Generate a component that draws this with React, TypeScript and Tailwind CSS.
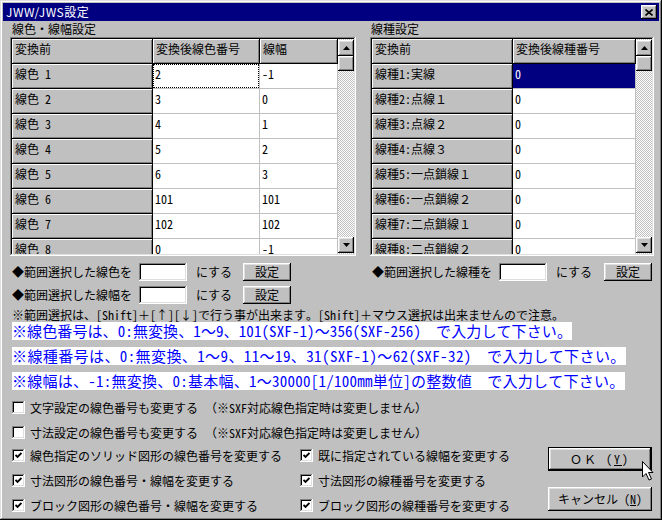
import React from 'react';

const raised =
  'shadow-[inset_-1px_-1px_#000,inset_1px_1px_#fff,inset_-2px_-2px_#808080,inset_2px_2px_#dfdfdf]';
const sunken =
  'shadow-[inset_-1px_-1px_#fff,inset_1px_1px_#808080,inset_-2px_-2px_#dfdfdf,inset_2px_2px_#000]';
const fixedCell =
  'bg-[#c0c0c0] border-r border-b border-black shadow-[inset_1px_1px_#fff,inset_-1px_-1px_#808080] pl-[3px] pt-[3px] overflow-hidden whitespace-nowrap';
const dataCell = 'bg-white border-r border-b border-[#c0c0c0] pl-[2px] pt-[3px] overflow-hidden whitespace-nowrap';
const selCell = 'bg-[#000080] text-white border-r border-b border-[#c0c0c0] pl-[2px] pt-[3px] overflow-hidden whitespace-nowrap';

function Arrow({ down }: { down?: boolean }) {
  return (
    <div className={`w-[16px] h-[16px] shrink-0 bg-[#c0c0c0] flex items-center justify-center ${raised}`}>
      <svg width="7" height="4" viewBox="0 0 7 4">
        {down ? <polygon points="0,0 7,0 3.5,4" fill="#000" /> : <polygon points="3.5,0 7,4 0,4" fill="#000" />}
      </svg>
    </div>
  );
}

function Scrollbar() {
  return (
    <div className="w-[16px] shrink-0 flex flex-col pt-[1px] pb-[1px] bg-[repeating-conic-gradient(#c0c0c0_0%_25%,#fff_0%_50%)] bg-[length:2px_2px]">
      <Arrow />
      <div className={`h-[15px] shrink-0 bg-[#c0c0c0] ${raised}`} />
      <div className="flex-1" />
      <Arrow down />
    </div>
  );
}

const colorRows = [
  ['線色 1', '2', '-1'],
  ['線色 2', '3', '0'],
  ['線色 3', '4', '1'],
  ['線色 4', '5', '2'],
  ['線色 5', '6', '3'],
  ['線色 6', '101', '101'],
  ['線色 7', '102', '102'],
  ['線色 8', '0', '-1'],
];

const typeRows = [
  '線種1:実線',
  '線種2:点線１',
  '線種3:点線２',
  '線種4:点線３',
  '線種5:一点鎖線１',
  '線種6:一点鎖線２',
  '線種7:二点鎖線１',
  '線種8:二点鎖線２',
];

function Check({ checked }: { checked?: boolean }) {
  return (
    <div className={`w-[13px] h-[13px] shrink-0 bg-white flex items-center justify-center ${sunken}`}>
      {checked && (
        <svg width="7" height="7" viewBox="0 0 7 7">
          <polyline points="0.5,3 2.5,5 6.5,1" fill="none" stroke="#000" strokeWidth="1.8" />
        </svg>
      )}
    </div>
  );
}

function Btn({ label, className = '' }: { label: React.ReactNode; className?: string }) {
  return (
    <div className={`bg-[#c0c0c0] flex items-center justify-center ${raised} ${className}`}>{label}</div>
  );
}

export default function App() {
  return (
    <div className="relative w-[662px] h-[520px] bg-[#c0c0c0] p-[3px] overflow-hidden text-[12px] leading-[14px] text-black font-['Noto_Sans_Mono_CJK_JP','Noto_Sans_CJK_JP',sans-serif] shadow-[inset_-1px_-1px_#000,inset_1px_1px_#dfdfdf,inset_-2px_-2px_#808080,inset_2px_2px_#fff]">
      {/* title bar */}
      <div className="h-[18px] bg-[#000080] flex items-center justify-between pl-[3px] pr-[2px]">
        <span className="text-white font-['Noto_Sans_CJK_JP',sans-serif] tracking-[0.5px]">JWW/JWS設定</span>
        <div className={`w-[16px] h-[14px] bg-[#c0c0c0] flex items-center justify-center ${raised}`}>
          <svg width="8" height="7" viewBox="0 0 8 7">
            <path d="M0.5 0.5 L7.5 6.5 M7.5 0.5 L0.5 6.5" stroke="#000" strokeWidth="1.6" />
          </svg>
        </div>
      </div>

      <div className="pl-[7px] pr-[5px]">
        {/* section labels */}
        <div className="h-[16px] flex items-center">
          <span className="w-[361px] pl-[2px]">線色・線幅設定</span>
          <span>線種設定</span>
        </div>

        {/* grids */}
        <div className="flex gap-[14px]">
          <div className={`w-[346px] h-[219px] p-[2px] flex ${sunken}`}>
            <div className="flex-1 bg-white overflow-hidden">
              <div className="flex h-[25px]">
                <div className={`w-[141px] ${fixedCell}`}>変換前</div>
                <div className={`w-[107px] ${fixedCell}`}>変換後線色番号</div>
                <div className={`flex-1 ${fixedCell}`}>線幅</div>
              </div>
              {colorRows.map((r, i) => (
                <div key={i} className="flex h-[25px] shrink-0">
                  <div className={`w-[141px] ${fixedCell}`}>{r[0]}</div>
                  <div className={`w-[107px] ${dataCell}`}>
                    {i === 0 ? (
                      <div className="h-[24px] -ml-[2px] -mt-[3px] pl-[2px] pt-[3px] outline outline-1 outline-dotted outline-black -outline-offset-1">
                        {r[1]}
                      </div>
                    ) : (
                      r[1]
                    )}
                  </div>
                  <div className={`flex-1 ${dataCell}`}>{r[2]}</div>
                </div>
              ))}
            </div>
            <Scrollbar />
          </div>

          <div className={`w-[284px] h-[219px] p-[2px] flex ${sunken}`}>
            <div className="flex-1 bg-white overflow-hidden">
              <div className="flex h-[25px]">
                <div className={`w-[141px] ${fixedCell}`}>変換前</div>
                <div className={`flex-1 ${fixedCell}`}>変換後線種番号</div>
              </div>
              {typeRows.map((r, i) => (
                <div key={i} className="flex h-[25px] shrink-0">
                  <div className={`w-[141px] ${fixedCell}`}>{r}</div>
                  <div className={`flex-1 ${i === 0 ? selCell : dataCell}`}>0</div>
                </div>
              ))}
            </div>
            <Scrollbar />
          </div>
        </div>

        {/* range rows */}
        <div className="mt-[7px] h-[18px] flex items-center">
          <div className="w-[362px] flex items-center pl-[2px]">
            <span className="w-[127px]">◆範囲選択した線色を</span>
            <div className={`w-[48px] h-[18px] bg-white ${sunken}`} />
            <span className="w-[56px] pl-[9px]">にする</span>
            <Btn label="設定" className="w-[48px] h-[18px]" />
          </div>
          <div className="flex items-center">
            <span className="w-[127px]">◆範囲選択した線種を</span>
            <div className={`w-[48px] h-[18px] bg-white ${sunken}`} />
            <span className="w-[57px] pl-[9px]">にする</span>
            <Btn label="設定" className="w-[48px] h-[18px]" />
          </div>
        </div>
        <div className="mt-[5px] h-[18px] flex items-center pl-[2px]">
          <span className="w-[127px]">◆範囲選択した線幅を</span>
          <div className={`w-[48px] h-[18px] bg-white ${sunken}`} />
          <span className="w-[56px] pl-[9px]">にする</span>
          <Btn label="設定" className="w-[48px] h-[18px]" />
        </div>

        <div className="mt-[3px] h-[15px] leading-[15px] flex items-center pl-[2px] whitespace-nowrap">
          ※範囲選択は、[Shift]＋[↑][↓]で行う事が出来ます。[Shift]＋マウス選択は出来ませんので注意。
        </div>

        {/* blue notes */}
        <div className="pl-[2px] text-[15px] leading-[18px] text-[#0000ff] whitespace-nowrap">
          <div>
            <span className="inline-block h-[18px] bg-white tracking-[0.1px]">
              ※線色番号は、0:無変換、1～9、101(SXF-1)～356(SXF-256)　で入力して下さい。
            </span>
          </div>
          <div className="mt-[7px]">
            <span className="inline-block h-[18px] bg-white tracking-[0.4px]">
              ※線種番号は、0:無変換、1～9、11～19、31(SXF-1)～62(SXF-32)　で入力して下さい。
            </span>
          </div>
          <div className="mt-[7px]">
            <span className="inline-block h-[18px] bg-white tracking-[0.25px]">
              ※線幅は、-1:無変換、0:基本幅、1～30000[1/100mm単位]の整数値　で入力して下さい。
            </span>
          </div>
        </div>

        {/* checkboxes */}
        <div className="mt-[9px] h-[17px] flex items-center pl-[2px] whitespace-nowrap">
          <Check />
          <span className="w-[180px] pl-[5px]">文字設定の線色番号も変更する</span>
          <span>（※SXF対応線色指定時は変更しません）</span>
        </div>
        <div className="mt-[8px] h-[17px] flex items-center pl-[2px] whitespace-nowrap">
          <Check />
          <span className="w-[180px] pl-[5px]">寸法設定の線色番号も変更する</span>
          <span>（※SXF対応線色指定時は変更しません）</span>
        </div>

        <div className="flex">
          <div className="w-[538px] pl-[2px] whitespace-nowrap">
            {[
              ['線色指定のソリッド図形の線色番号を変更する', '既に指定されている線幅を変更する'],
              ['寸法図形の線色番号・線幅を変更する', '寸法図形の線種番号を変更する'],
              ['ブロック図形の線色番号・線幅を変更する', 'ブロック図形の線種番号を変更する'],
            ].map((r, i) => (
              <div key={i} className={`${i === 0 ? 'mt-[6px]' : 'mt-[8px]'} h-[17px] flex items-center`}>
                <Check checked />
                <span className="w-[275px] pl-[5px]">{r[0]}</span>
                <Check checked />
                <span className="pl-[5px]">{r[1]}</span>
              </div>
            ))}
          </div>
          <div className="flex flex-col">
            <div className="mt-[6px] w-[104px] h-[24px] border border-black">
              <Btn
                className="w-full h-full tracking-[2px]"
                label={
                  <span>
                    ＯＫ (<span className="underline">Y</span>)
                  </span>
                }
              />
            </div>
            <Btn
              className="mt-[16px] w-[104px] h-[24px]"
              label={
                <span>
                  キャンセル (<span className="underline">N</span>)
                </span>
              }
            />
          </div>
        </div>
      </div>

      {/* mouse cursor */}
      <svg className="absolute left-[642px] top-[461px]" width="12" height="20" viewBox="0 0 12 20">
        <polygon points="0.5,0.5 0.5,16 4,12.5 7,19 9.5,18 6.5,11.5 11,11.5" fill="#fff" stroke="#000" strokeWidth="1" />
      </svg>
    </div>
  );
}
